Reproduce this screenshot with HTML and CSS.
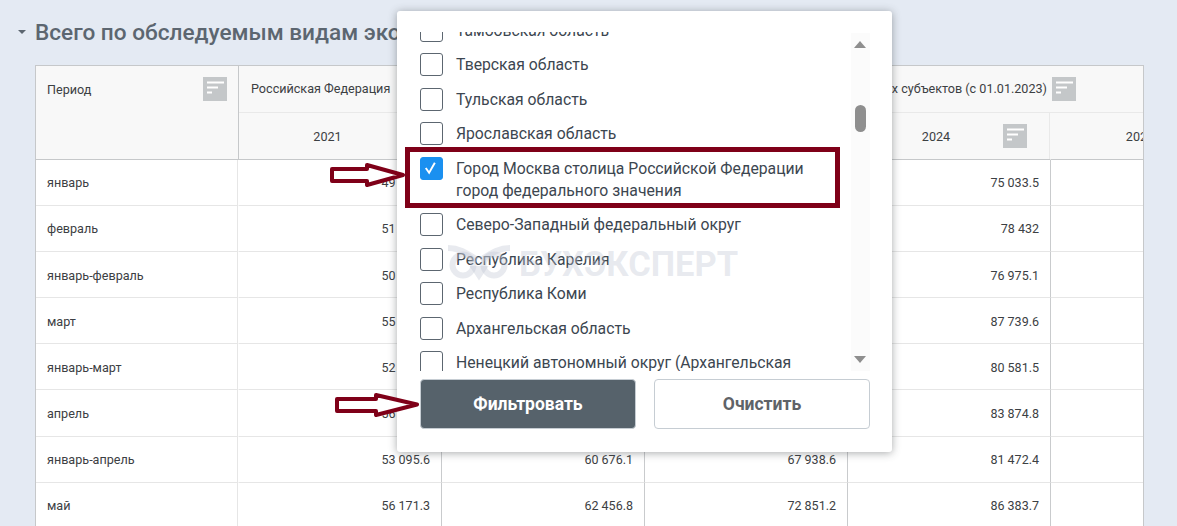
FILE: index.html
```html
<!DOCTYPE html>
<html lang="ru">
<head>
<meta charset="utf-8">
<title>Всего по обследуемым видам экономической деятельности</title>
<link rel="stylesheet" href="styles.css">
</head>
<body>
<main class="page">
  <h2 class="section-title"><span class="caret"></span>Всего по обследуемым видам экономической деятельности</h2>
  <div class="table-wrap">
    <table class="data-table">
      <colgroup>
        <col class="col-year"><col class="col-year"><col class="col-year"><col class="col-year"><col class="col-year"><col class="col-year">
      </colgroup>
      <thead>
        <tr>
          <th rowspan="2" class="head-period">
            <div class="head-line"><span>Период</span>
              <svg class="filter-icon" viewBox="0 0 24 24"><rect width="24" height="24"/><path d="M4 5.500H21M4 10.500H15M4 15.500H9"/></svg>
            </div>
          </th>
          <th colspan="3" class="head-group"><span class="group-label">Российская Федерация</span></th>
          <th colspan="2" class="head-group">
            <div class="group-end"><span class="group-label">всех субъектов (с 01.01.2023)</span>
              <svg class="filter-icon" viewBox="0 0 24 24"><rect width="24" height="24"/><path d="M4 5.500H21M4 10.500H15M4 15.500H9"/></svg>
            </div>
          </th>
        </tr>
        <tr>
          <th class="head-year">2021</th>
          <th class="head-year">2022</th>
          <th class="head-year">2023</th>
          <th class="head-year head-year-icon"><span class="year-label">2024</span>
            <svg class="filter-icon filter-icon-over" viewBox="0 0 24 24"><rect width="24" height="24"/><path d="M4 5.500H21M4 10.500H15M4 15.500H9"/></svg>
          </th>
          <th class="head-year head-year-last">2025</th>
        </tr>
      </thead>
      <tbody>
        <tr><td>январь</td><td>49 000.0</td><td></td><td></td><td>75 033.5</td><td></td></tr>
        <tr><td>февраль</td><td>51 000.0</td><td></td><td></td><td>78 432</td><td></td></tr>
        <tr><td>январь-февраль</td><td>50 000.0</td><td></td><td></td><td>76 975.1</td><td></td></tr>
        <tr><td>март</td><td>55 000.0</td><td></td><td></td><td>87 739.6</td><td></td></tr>
        <tr><td>январь-март</td><td>52 000.0</td><td></td><td></td><td>80 581.5</td><td></td></tr>
        <tr><td>апрель</td><td>56 000.0</td><td></td><td></td><td>83 874.8</td><td></td></tr>
        <tr><td>январь-апрель</td><td>53 095.6</td><td>60 676.1</td><td>67 938.6</td><td>81 472.4</td><td></td></tr>
        <tr><td>май</td><td>56 171.3</td><td>62 456.8</td><td>72 851.2</td><td>86 383.7</td><td></td></tr>
      </tbody>
    </table>
  </div>
</main>

<section class="popup">
  <div class="popup-body">
    <ul class="region-list">
      <li class="region"><span class="check"></span><span class="region-name">Тамбовская область</span></li>
      <li class="region"><span class="check"></span><span class="region-name">Тверская область</span></li>
      <li class="region"><span class="check"></span><span class="region-name">Тульская область</span></li>
      <li class="region"><span class="check"></span><span class="region-name">Ярославская область</span></li>
      <li class="region"><span class="check check-on"><svg viewBox="0 0 22 22"><path d="M5 10.500L8.500 15.500L14.500 5"/></svg></span><span class="region-name">Город Москва столица Российской Федерации<br>город федерального значения</span></li>
      <li class="region"><span class="check"></span><span class="region-name">Северо-Западный федеральный округ</span></li>
      <li class="region"><span class="check"></span><span class="region-name">Республика Карелия</span></li>
      <li class="region"><span class="check"></span><span class="region-name">Республика Коми</span></li>
      <li class="region"><span class="check"></span><span class="region-name">Архангельская область</span></li>
      <li class="region"><span class="check"></span><span class="region-name">Ненецкий автономный округ (Архангельская</span></li>
    </ul>
    <div class="scrollbar">
      <span class="scroll-up"></span>
      <span class="scroll-thumb"></span>
      <span class="scroll-down"></span>
    </div>
  </div>
  <div class="popup-actions">
    <button class="btn btn-primary">Фильтровать</button>
    <button class="btn btn-secondary">Очистить</button>
  </div>
</section>

<div class="highlight-frame"></div>
<svg class="arrow arrow-one" viewBox="0 0 76 24"><path d="M2 6H37V2L73 12L37 22V18H2Z"/></svg>
<svg class="arrow arrow-two" viewBox="0 0 86 24"><path d="M2 6H41V2L82 11.500L41 22V18H2Z"/></svg>

<div class="watermark">
  <svg class="owl" viewBox="0 0 70 38"><path d="M4 3C14 3 22 7 33 15M66 3C56 3 48 7 37 15M35 30L31 24H39Z"/><circle cx="19" cy="20" r="10.500"/><circle cx="50" cy="20" r="10.500"/></svg>
  <span>БУХЭКСПЕРТ</span>
</div>
</body>
</html>
```

FILE: styles.css
```css
* { box-sizing: border-box; }

html, body {
  margin: 0;
  height: 526px;
  overflow: hidden;
}

body {
  position: relative;
  background: #e4eaf3;
  font-family: Roboto, "Noto Sans", sans-serif;
  color: #3c4043;
}

.page {
  padding: 18px 33px 0 35px;
}

.section-title {
  position: relative;
  margin: 0 0 18px;
  height: 29px;
  font-size: 22.600px;
  line-height: 29px;
  font-weight: 500;
  color: #5c6670;
  white-space: nowrap;
}

.caret {
  position: absolute;
  left: -17px;
  top: 12px;
  border-left: 4.500px solid transparent;
  border-right: 4.500px solid transparent;
  border-top: 4px solid #5c6670;
}

.table-wrap {
  width: 1109px;
  height: 461px;
  overflow: hidden;
  border: 1px solid #c6c8ca;
  border-bottom: 0;
  background: #fff;
}

.data-table {
  width: 1218px;
  table-layout: fixed;
  border-collapse: separate;
  border-spacing: 0;
  font-size: 12.600px;
  line-height: 16px;
  color: #3c4043;
}

.col-year { width: 203px; }

th {
  background: #f8f8f8;
  font-weight: 400;
  padding: 0;
  text-align: center;
}

.head-period {
  padding: 11px 11px 0;
  vertical-align: top;
  text-align: left;
  border-right: 1px solid #c6c8ca;
  border-bottom: 1px solid #c6c8ca;
}

.head-line {
  display: flex;
  justify-content: space-between;
  align-items: flex-start;
  line-height: 25px;
}

.head-group {
  height: 47px;
  padding: 0 12px;
  text-align: left;
  border-bottom: 1px solid #e9e9e9;
}

.group-end {
  display: flex;
  justify-content: flex-end;
  align-items: center;
  gap: 5px;
  width: 216px;
}

.group-end .group-label { white-space: nowrap; }

.head-year {
  position: relative;
  height: 47px;
  padding: 2px 25px 0 0;
  border-right: 1px solid #e9e9e9;
  border-bottom: 1px solid #c6c8ca;
}

.head-year-icon {
  padding-right: 26px;
  border-right-color: #f8f8f8;
  box-shadow: inset -1px 0 0 #e9e9e9;
}

.head-year-last { border-right: 0; }

.filter-icon {
  display: block;
  flex: none;
  width: 24px;
  height: 24px;
}

.filter-icon rect { fill: #c4c7c9; }
.filter-icon path { stroke: #fff; stroke-width: 2; fill: none; }

.filter-icon-over {
  position: absolute;
  right: 23px;
  top: 11px;
}

td {
  height: 46px;
  padding: 0 11px;
  text-align: right;
  font-size: 12.500px;
  border-right: 1px solid #c9cbcd;
  border-bottom: 1px solid #e6e6e6;
}

tbody tr:nth-child(n+3) td { padding-top: 2px; }
tbody tr:nth-child(n+6) td { padding-top: 1px; }
tbody tr:nth-child(6) td { height: 47px; }

td:first-child {
  text-align: left;
  font-size: 12.600px;
  border-right-color: #fff;
  box-shadow: inset -1px 0 0 #e6e6e6;
}

/* Popup */
.popup {
  position: absolute;
  left: 397px;
  top: 11px;
  width: 495px;
  height: 441px;
  padding: 21px 22px 0 23px;
  background: #fff;
  border-radius: 3px;
  box-shadow: 0 1px 8px rgba(60, 64, 67, 0.45);
}

.popup-body {
  position: relative;
  height: 339px;
  overflow: hidden;
}

.region-list {
  list-style: none;
  margin: -12.500px 0 0;
  padding: 0;
  width: 420px;
}

.region {
  display: flex;
  gap: 13px;
  margin-bottom: 12.500px;
  font-size: 15.750px;
  line-height: 22.050px;
  color: #3c4650;
}

.check {
  flex: none;
  width: 23px;
  height: 23px;
  margin-top: -1px;
  border: 1px solid #5c6670;
  border-radius: 3px;
  background: #fff;
}

.check svg { display: block; width: 21px; height: 21px; }
.check path { fill: none; stroke: #fff; stroke-width: 2; }

.check-on {
  background: #1a90f0;
  border-color: #1a90f0;
}

.region-name { white-space: nowrap; }

.scrollbar {
  position: absolute;
  right: 0;
  top: 1px;
  bottom: 0;
  width: 19px;
  background: #fbfbfb;
}

.scroll-up,
.scroll-down {
  position: absolute;
  left: 3px;
  border-left: 6.500px solid transparent;
  border-right: 6.500px solid transparent;
}

.scroll-up {
  top: 8px;
  border-bottom: 7px solid #8e8e8e;
}

.scroll-down {
  bottom: 8px;
  border-top: 7px solid #8e8e8e;
}

.scroll-thumb {
  position: absolute;
  left: 4px;
  top: 72px;
  width: 11px;
  height: 27px;
  border-radius: 6px;
  background: #8e8e8e;
}

.popup-actions {
  display: flex;
  gap: 18px;
  margin-top: 8px;
}

.btn {
  width: 216px;
  height: 50px;
  border-radius: 4px;
  font-family: inherit;
  font-size: 17.500px;
  font-weight: 700;
}

.btn-primary {
  background: #56626b;
  border: 1px solid #c6cdd3;
  color: #fff;
}

.btn-secondary {
  background: #fff;
  border: 1px solid #c6cdd3;
  color: #5f6368;
}

/* Annotations */
.highlight-frame {
  position: absolute;
  left: 405px;
  top: 147px;
  width: 435px;
  height: 61px;
  border: 5px solid #7f0018;
}

.arrow {
  position: absolute;
  fill: #fff;
  stroke: #7f0018;
  stroke-width: 4;
  stroke-linejoin: round;
}

.arrow-one {
  left: 330px;
  top: 163px;
  width: 76px;
  height: 24px;
}

.arrow-two {
  left: 335px;
  top: 393px;
  width: 86px;
  height: 24px;
}

.watermark {
  position: absolute;
  left: 444px;
  top: 245px;
  display: flex;
  align-items: center;
  gap: 5px;
  pointer-events: none;
  font-size: 34.500px;
  line-height: 36px;
  font-weight: 700;
  color: rgba(190, 196, 210, 0.36);
}

.owl {
  width: 70px;
  height: 38px;
  fill: none;
  stroke: rgba(190, 196, 210, 0.36);
  stroke-width: 6;
}
```
